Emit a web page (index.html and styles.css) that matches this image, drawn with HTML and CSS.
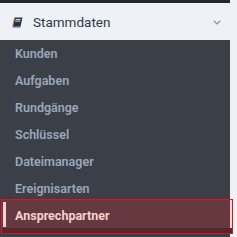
FILE: index.html
```html
<!DOCTYPE html>
<html>
<head>
<meta charset="utf-8">
<link rel="stylesheet" href="styles.css">
</head>
<body>
<nav class="sidebar">
  <div class="topbar"></div>
  <div class="group-head">
    <svg class="book" width="11" height="11" viewBox="0 0 11 11">
      <path d="M2.6 0.5 H10.5 L8.6 9.2 H0.8 Z" fill="#2b3340"/>
      <path d="M0.8 9.2 H8.6 L8.3 10.5 H0.5 Z" fill="#3d5a8a"/>
      <path d="M3.6 2.4 H8.6 M3.2 4.1 H8.2" stroke="#eef2f6" stroke-width="0.9"/>
      <path d="M2.6 0.5 L0.8 9.2" stroke="#d9832e" stroke-width="0.8"/>
    </svg>
    <span class="head-label">Stammdaten</span>
    <svg class="chev" width="8" height="5" viewBox="0 0 8 5">
      <path d="M0.8 0.8 L4 3.9 L7.2 0.8" fill="none" stroke="#8696aa" stroke-width="1.3"/>
    </svg>
  </div>
  <ul class="menu">
    <li class="item">Kunden</li>
    <li class="item">Aufgaben</li>
    <li class="item">Rundgänge</li>
    <li class="item">Schlüssel</li>
    <li class="item">Dateimanager</li>
    <li class="item">Ereignisarten</li>
    <li class="item active">Ansprechpartner</li>
  </ul>
</nav>
</body>
</html>
```
FILE: styles.css
```css
html, body {
  margin: 0;
  padding: 0;
  background: #eef2f6;
  height: 237px;
  overflow: hidden;
}
.sidebar {
  width: 230px;
  font-family: Roboto, "Liberation Sans", sans-serif;
}
.topbar {
  height: 3px;
  background: #23262d;
}
.group-head {
  height: 37px;
  width: 237px;
  background: #eef2f6;
  display: flex;
  align-items: center;
  padding-left: 12px;
  box-sizing: border-box;
}
.book {
  display: block;
  margin-top: 1px;
}
.head-label {
  margin-left: 10px;
  font-size: 13.5px;
  color: #2f3848;
  flex: 1;
}
.chev {
  display: block;
  margin-right: 16px;
  margin-top: 2px;
}
.menu {
  list-style: none;
  margin: 0;
  padding: 0;
  background: #3b3f48;
  height: 197px;
}
.item {
  height: 27px;
  line-height: 27px;
  padding-left: 15px;
  font-size: 12.5px;
  font-weight: 600;
  color: #9aa8bc;
}
.item.active {
  position: relative;
  margin-top: -2px;
  margin-left: 2px;
  width: 230px;
  box-sizing: border-box;
  height: 33px;
  line-height: 32px;
  padding-left: 13px;
  color: #f4d2cf;
  font-weight: 700;
  background: #663840;
  box-shadow: inset 0 -5px 0 #55262e;
  outline: 1px solid #e4101a;
}
.item.active::before {
  content: "";
  position: absolute;
  left: 1px;
  top: 2px;
  bottom: 6px;
  width: 3px;
  background: #f6d0d4;
}
.item.active::after {
  content: "";
  position: absolute;
  right: 0;
  top: 0;
  bottom: 5px;
  width: 2px;
  background: #f6d0d4;
}
```
